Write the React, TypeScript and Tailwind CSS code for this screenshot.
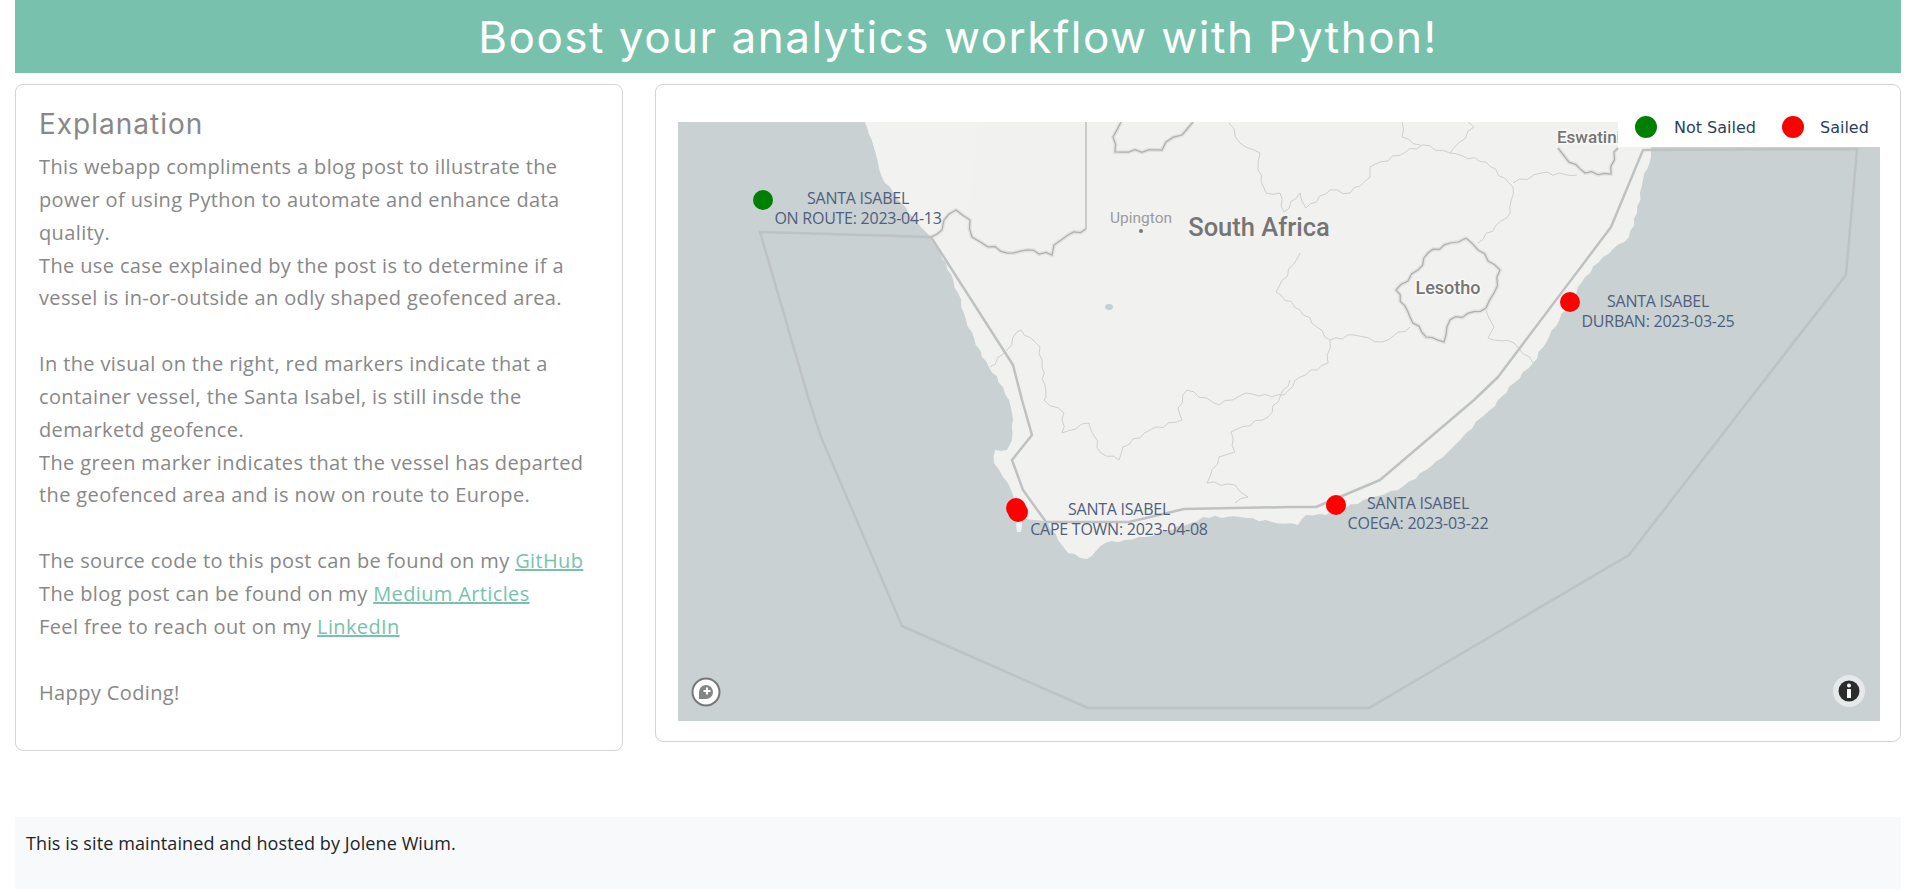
const coast =
  "865,122 872,140 878,160 882,177 901,203 921,227 931,237 946,263 958,293 966,320 982,357 1003,387 1009,400 1013,420 1012,440 1007,450 995,450 994,463 1003,477 1011,490 1015,500 1017,532 1021,532 1021,517 1048,523 1058,540 1068,553 1087,559 1105,543 1125,540 1146,537 1191,523 1203,517 1240,517 1272,522 1298,525 1306,515 1326,515 1370,498 1398,490 1426,470 1442,458 1450,450 1466,433 1482,417 1490,410 1514,383 1533,363 1549,337 1569,303 1585,277 1603,257 1629,237 1637,213 1643,180 1651,157 1651,148 1659,122"

const fence =
  "760,232 931,237 1013,365 1022,400 1032,435 1012,460 1023,490 1046,522 1129,522 1184,509 1290,507 1316,507 1380,480 1474,400 1498,377 1611,227 1643,150 1857,149 1846,275 1749,400 1629,555 1369,708 1088,708 902,626 821,437 809,400"

const namibiaBorder = "1086,122 1086,229"

const countryBorders = [
  "1086,229 1068,235 1054,245 1052,255 1027,250 1007,253 982,243 972,237 970,220 956,210 944,220 942,230 931,237",
  "1121,122 1113,137 1115,152 1162,150 1166,142 1182,135 1193,122",
  "1558,148 1565,157 1585,173 1611,174 1614,152 1618,148",
  "1466,238 1478,250 1500,270 1494,293 1486,308 1450,320 1444,342 1426,337 1410,317 1396,290 1418,270 1428,253 1450,243 1466,238",
]

const provinceBorders = [
  "1229,123 1240,143 1260,153 1258,170 1266,193 1280,193 1284,212 1300,193 1306,208 1330,190 1350,193 1370,177 1370,167 1422,145 1450,153 1486,162 1513,187 1510,213 1478,243",
  "1402,122 1402,137 1420,145",
  "1450,153 1474,127 1468,122",
  "1513,183 1541,173 1577,175",
  "1300,253 1276,292 1300,310 1330,340 1354,335 1382,342 1410,327",
  "1330,340 1328,363 1300,377 1284,395 1272,397 1246,393 1219,405 1187,390 1178,408 1182,420 1150,430 1123,447 1119,460 1101,453 1089,423 1062,433 1064,413 1044,400 1046,397 1042,367 1040,347 1021,330 1017,332 1007,350 990,367",
  "1486,310 1494,327 1488,338 1514,343 1533,363",
  "1290,380 1268,417 1231,432 1235,452 1219,457 1207,483 1235,485 1248,497 1235,503",
]

const stops = [
  { cx: 1570, cy: 302, color: "#ff0000", x: 1658, y: 307, place: "DURBAN: 2023-03-25" },
  { cx: 1336, cy: 505, color: "#ff0000", x: 1418, y: 509, place: "COEGA: 2023-03-22" },
  { cx: 1016, cy: 508, color: "#ff0000", x: 1119, y: 515, place: "CAPE TOWN: 2023-04-08" },
  { cx: 1018, cy: 512, color: "#ff0000", x: 1119, y: 515, place: "" },
  { cx: 763, cy: 200, color: "#008000", x: 858, y: 204, place: "ON ROUTE: 2023-04-13" },
]

// rivers and borders are jagged, so break up the straight runs
function wiggle(points: string, amp = 1.6) {
  const pts = points.split(" ").map((p) => p.split(",").map(Number))
  const out: string[] = []
  pts.forEach(([x, y], i) => {
    out.push(`${x},${y}`)
    if (i === pts.length - 1) return
    const [nx, ny] = pts[i + 1]
    const len = Math.hypot(nx - x, ny - y)
    const steps = Math.floor(len / 6)
    for (let s = 1; s < steps; s++) {
      const t = s / steps
      const off = Math.sin(x * 0.7 + y * 1.3 + s * 2.4) * amp
      out.push(`${(x + (nx - x) * t - ((ny - y) / len) * off).toFixed(1)},${(y + (ny - y) * t + ((nx - x) / len) * off).toFixed(1)}`)
    }
  })
  return out.join(" ")
}

function ShipMap() {
  return (
    <svg viewBox="678 122 1202 599" className="block w-[1202px] h-[599px]">
      <rect x="678" y="122" width="1202" height="599" fill="#c9d1d3" />
      <polygon points={`${wiggle(coast, 1.2)} 1880,122`} fill="#f1f1ef" />
      <polygon points="865,122 872,140 882,177 921,227 931,237 944,220 956,210 970,205 978,122" fill="#f2f2f1" />
      <ellipse cx="1109" cy="307" rx="4" ry="3" fill="#c3d0d4" />

      {provinceBorders.map((points) => (
        <polyline key={points} points={wiggle(points)} fill="none" stroke="#cfcfce" strokeWidth="1" />
      ))}
      {countryBorders.map((points) => (
        <g key={points}>
          <polyline points={wiggle(points)} fill="none" stroke="#e2e2e0" strokeWidth="4" />
          <polyline points={wiggle(points)} fill="none" stroke="#b0b0af" strokeWidth="1.25" />
        </g>
      ))}
      <polyline points={namibiaBorder} fill="none" stroke="#bcbcbb" strokeWidth="1.5" />
      <polygon points={fence} fill="none" stroke="#bfc2c2" strokeWidth="2.5" strokeLinejoin="round" />

      <circle cx="1141" cy="231" r="2" fill="#777777" />
      <text x="1141" y="223" textAnchor="middle" fill="#9c9c9c" className="font-['Roboto',sans-serif] text-[15.5px]">Upington</text>
      <text x="1259" y="236" textAnchor="middle" fill="#757575" className="font-['Roboto',sans-serif] text-[25.5px] font-medium">South Africa</text>
      <text x="1448" y="294" textAnchor="middle" fill="#757575" stroke="#f8f8f8" strokeWidth="3" className="font-['Roboto',sans-serif] text-[18px] font-medium [paint-order:stroke]">Lesotho</text>
      <text x="1557" y="143" fill="#757575" stroke="#f8f8f8" strokeWidth="3" className="font-['Roboto',sans-serif] text-[17px] font-medium [paint-order:stroke]">Eswatini</text>

      {stops.map((stop) => (
        <circle key={`${stop.cx}-${stop.cy}`} cx={stop.cx} cy={stop.cy} r="10" fill={stop.color} />
      ))}
      {stops.filter((stop) => stop.place).map((stop) => (
        <text key={stop.place} textAnchor="middle" fill="#4f5f7c" className="font-['Open_Sans',sans-serif] text-[16px] tracking-[-0.25px]">
          <tspan x={stop.x} y={stop.y}>SANTA ISABEL</tspan>
          <tspan x={stop.x} y={stop.y + 20}>{stop.place}</tspan>
        </text>
      ))}
    </svg>
  )
}

function MapLogo() {
  return (
    <svg viewBox="0 0 30 30" className="w-[30px] h-[30px]">
      <circle cx="15" cy="15" r="13.5" fill="#ffffff" stroke="#777777" strokeWidth="2" />
      <path d="M8 22v-7a7 7 0 1 1 7 7z" fill="#858585" />
      <path d="M16 10.5v7M12.5 14h7" stroke="#ffffff" strokeWidth="2" />
    </svg>
  )
}

function InfoIcon() {
  return (
    <svg viewBox="0 0 32 32" className="w-8 h-8">
      <circle cx="16" cy="16" r="16" fill="#e6e9ea" />
      <circle cx="16" cy="16" r="10.5" fill="#2c2c2c" />
      <circle cx="16" cy="10.5" r="2" fill="#ffffff" />
      <rect x="14" y="14" width="4" height="9" rx="0.5" fill="#ffffff" />
    </svg>
  )
}

export default function App() {
  return (
    <div className="px-[15px] h-[892px] bg-white font-['Open_Sans',sans-serif]">
      <header className="h-[73px] bg-[#78c2ad] flex items-center justify-center">
        <h1 className="text-white text-[44px] font-['Inter',sans-serif] tracking-[1.5px]">
          Boost your analytics workflow with Python!
        </h1>
      </header>

      <div className="flex items-start gap-8 mt-[11px]">
        {/* Text card */}
        <section className="w-[608px] shrink-0 h-[667px] border border-[#d4d4d4] rounded-lg px-[23px] pt-[20px] text-[#888888]">
          <h2 className="text-[28px] leading-[38px] tracking-[1px] mb-[8px] font-['Inter',sans-serif]">Explanation</h2>
          <p className="text-[20px] leading-[32.85px] tracking-[0.37px]">
            This webapp compliments a blog post to illustrate the power of using Python to automate and enhance data quality.
            <br />
            The use case explained by the post is to determine if a vessel is in-or-outside an odly shaped geofenced area.
            <br />
            <br />
            In the visual on the right, red markers indicate that a container vessel, the Santa Isabel, is still insde the demarketd geofence.
            <br />
            The green marker indicates that the vessel has departed the geofenced area and is now on route to Europe.
            <br />
            <br />
            The source code to this post can be found on my <a href="#" className="text-[#78c2ad] underline">GitHub</a>
            <br />
            The blog post can be found on my <a href="#" className="text-[#78c2ad] underline">Medium Articles</a>
            <br />
            Feel free to reach out on my <a href="#" className="text-[#78c2ad] underline">LinkedIn</a>
            <br />
            <br />
            Happy Coding!
          </p>
        </section>

        {/* Map card */}
        <section className="flex-1 min-w-0 h-[658px] border border-[#d4d4d4] rounded-lg pl-[22px] pr-[21px] pt-[37px]">
          <div className="relative w-[1202px] h-[599px]">
            <ShipMap />
            <div className="absolute -top-[14px] right-0 w-[262px] h-[39px] bg-white flex items-start pt-[8px] pl-[17px] font-['DejaVu_Sans',sans-serif] text-[16px] leading-[24px] text-[#2a3f5f]">
              <span className="w-[22px] h-[22px] rounded-full bg-[#008000]" />
              <span className="ml-[17px] w-[82px] whitespace-nowrap">Not Sailed</span>
              <span className="ml-[26px] w-[22px] h-[22px] rounded-full bg-[#ff0000]" />
              <span className="ml-[16px] whitespace-nowrap">Sailed</span>
            </div>
            <div className="absolute left-[13px] bottom-[14px] flex">
              <MapLogo />
            </div>
            <div className="absolute right-[15px] bottom-[14px] flex">
              <InfoIcon />
            </div>
          </div>
        </section>
      </div>

      <footer className="mt-[66px] h-[72px] bg-[#f8f9fa] px-[11px] pt-[13px] text-[18px] leading-[26px] tracking-[0.1px] text-[#212529]">
        This is site maintained and hosted by Jolene Wium.
      </footer>
    </div>
  )
}
